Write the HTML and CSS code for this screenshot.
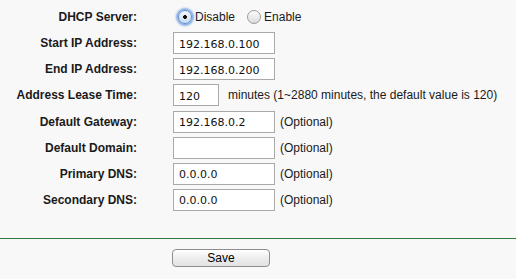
FILE: index.html
```html
<!DOCTYPE html>
<html lang="en">
<head>
  <meta charset="UTF-8">
  <title>DHCP Settings</title>
  <link rel="stylesheet" href="styles.css">
</head>
<body>
  <form class="dhcp-form">
    <div class="row">
      <label class="lbl">DHCP Server:</label>
      <div class="field">
        <label class="radio"><input type="radio" name="dhcp" checked> Disable</label>
        <label class="radio"><input type="radio" name="dhcp"> Enable</label>
      </div>
    </div>
    <div class="row">
      <label class="lbl">Start IP Address:</label>
      <div class="field"><input class="txt" type="text" value="192.168.0.100"></div>
    </div>
    <div class="row">
      <label class="lbl">End IP Address:</label>
      <div class="field"><input class="txt" type="text" value="192.168.0.200"></div>
    </div>
    <div class="row">
      <label class="lbl">Address Lease Time:</label>
      <div class="field"><input class="txt short" type="text" value="120"> <span class="note">minutes (1~2880 minutes, the default value is 120)</span></div>
    </div>
    <div class="row">
      <label class="lbl">Default Gateway:</label>
      <div class="field"><input class="txt" type="text" value="192.168.0.2"> <span class="note">(Optional)</span></div>
    </div>
    <div class="row">
      <label class="lbl">Default Domain:</label>
      <div class="field"><input class="txt" type="text" value=""> <span class="note">(Optional)</span></div>
    </div>
    <div class="row">
      <label class="lbl">Primary DNS:</label>
      <div class="field"><input class="txt" type="text" value="0.0.0.0"> <span class="note">(Optional)</span></div>
    </div>
    <div class="row">
      <label class="lbl">Secondary DNS:</label>
      <div class="field"><input class="txt" type="text" value="0.0.0.0"> <span class="note">(Optional)</span></div>
    </div>

    <div class="actions">
      <button type="button" class="save">Save</button>
    </div>
  </form>
</body>
</html>
```

FILE: styles.css
```css
body {
  margin: 0;
  background: #f8f8f8;
  font-family: "Liberation Sans", Arial, sans-serif;
  font-size: 12px;
  color: #1a1a1a;
}
.dhcp-form {
  padding-top: 4px;
}
.row {
  display: grid;
  grid-template-columns: 137px 1fr;
  column-gap: 36px;
  align-items: center;
  height: 26.14px;
}
.lbl {
  text-align: right;
  font-weight: bold;
  white-space: nowrap;
}
.field {
  display: flex;
  align-items: center;
  gap: 5px;
  white-space: nowrap;
}
.txt {
  box-sizing: border-box;
  width: 102px;
  height: 22px;
  margin: 0;
  padding: 2px 5px 0;
  border: 1px solid #a9a9a9;
  background: #fff;
  font-family: "DejaVu Sans", sans-serif;
  font-size: 11px;
  color: #111;
}
.txt.short {
  width: 46px;
  margin-right: 4px;
}
.note {
  color: #1a1a1a;
}
.radio {
  display: flex;
  align-items: center;
  gap: 3px;
  margin-right: 2px;
}
.radio input {
  appearance: none;
  box-sizing: border-box;
  width: 14px;
  height: 14px;
  margin: 0 0 0 5px;
  border-radius: 50%;
  border: 1px solid #9a9a9a;
  background: linear-gradient(#fdfdfd, #dcdcdc);
  position: relative;
}
.radio input:checked {
  border-color: #5a8fd0;
  background: radial-gradient(circle, #111 0 1.6px, transparent 2.2px), linear-gradient(#f4f8fd, #c9dbf2);
  box-shadow: 0 0 2px 2px rgba(90, 145, 220, 0.75);
}
.actions {
  margin-top: 25px;
  border-top: 1px solid #2c7b3d;
  padding-top: 10px;
  padding-left: 172px;
}
.save {
  width: 98px;
  height: 18px;
  padding: 0;
  border: 1px solid #8e8e8e;
  border-radius: 4px;
  background: linear-gradient(#ffffff, #ececec 55%, #e2e2e2);
  font-family: "Liberation Sans", Arial, sans-serif;
  font-size: 12px;
  color: #000;
}
```
